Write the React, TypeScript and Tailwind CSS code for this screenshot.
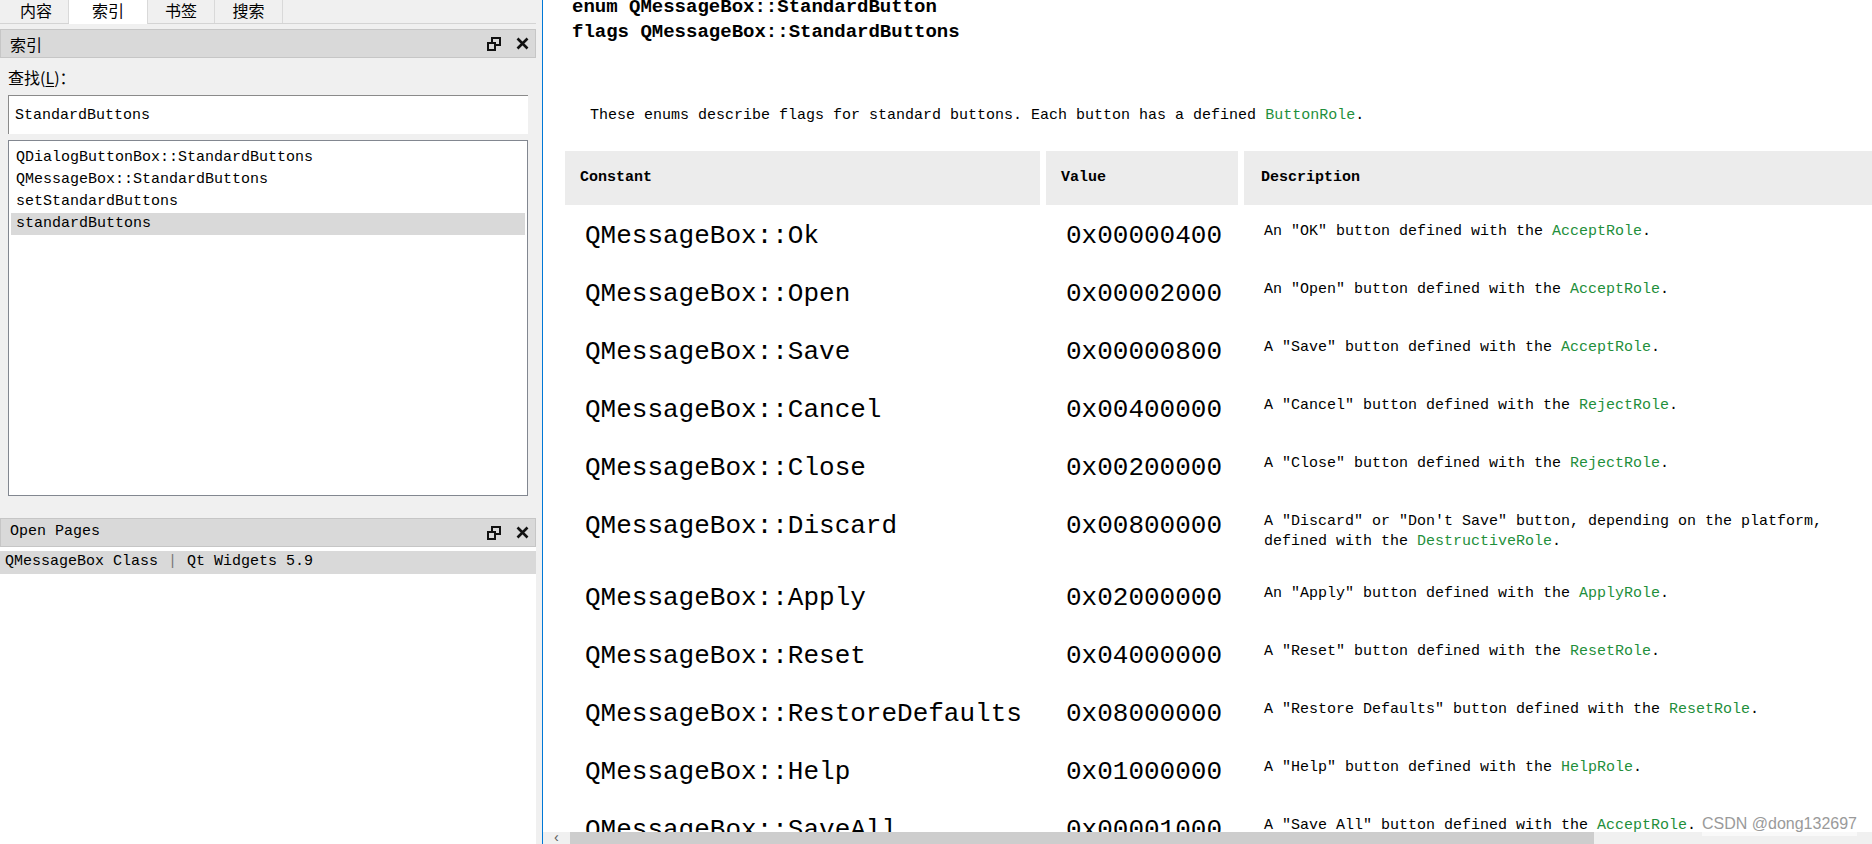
import React from "react";

const mono = { fontFamily: '"Liberation Mono", "Noto Sans CJK SC", monospace' };
const cjk = { fontFamily: '"Noto Sans CJK SC", "Liberation Sans", sans-serif' };

type Row = { name: string; value: string; desc: React.ReactNode[] };

const L = ({ children }: { children: React.ReactNode }) => (
  <span className="text-[#1f8f3c]">{children}</span>
);

const rows: Row[] = [
  { name: "QMessageBox::Ok", value: "0x00000400", desc: [<>An ″OK″ button defined with the <L>AcceptRole</L>.</>] },
  { name: "QMessageBox::Open", value: "0x00002000", desc: [<>An ″Open″ button defined with the <L>AcceptRole</L>.</>] },
  { name: "QMessageBox::Save", value: "0x00000800", desc: [<>A ″Save″ button defined with the <L>AcceptRole</L>.</>] },
  { name: "QMessageBox::Cancel", value: "0x00400000", desc: [<>A ″Cancel″ button defined with the <L>RejectRole</L>.</>] },
  { name: "QMessageBox::Close", value: "0x00200000", desc: [<>A ″Close″ button defined with the <L>RejectRole</L>.</>] },
  {
    name: "QMessageBox::Discard",
    value: "0x00800000",
    desc: [
      <>A ″Discard″ or ″Don't Save″ button, depending on the platform,</>,
      <>defined with the <L>DestructiveRole</L>.</>,
    ],
  },
  { name: "QMessageBox::Apply", value: "0x02000000", desc: [<>An ″Apply″ button defined with the <L>ApplyRole</L>.</>] },
  { name: "QMessageBox::Reset", value: "0x04000000", desc: [<>A ″Reset″ button defined with the <L>ResetRole</L>.</>] },
  { name: "QMessageBox::RestoreDefaults", value: "0x08000000", desc: [<>A ″Restore Defaults″ button defined with the <L>ResetRole</L>.</>] },
  { name: "QMessageBox::Help", value: "0x01000000", desc: [<>A ″Help″ button defined with the <L>HelpRole</L>.</>] },
  { name: "QMessageBox::SaveAll", value: "0x00001000", desc: [<>A ″Save All″ button defined with the <L>AcceptRole</L>.</>] },
];

function FloatIcon() {
  return (
    <svg width="14" height="14" viewBox="0 0 14 14" fill="none" stroke="#111" strokeWidth="2">
      <rect x="5" y="1" width="8" height="7" />
      <rect x="1" y="6" width="7" height="7" fill="#d9d9d9" />
    </svg>
  );
}

function CloseIcon() {
  return (
    <svg width="13" height="13" viewBox="0 0 13 13" stroke="#111" strokeWidth="2.6">
      <path d="M1.5 1.5 L11.5 11.5 M11.5 1.5 L1.5 11.5" />
    </svg>
  );
}

function DockTitle({ title, cn }: { title: string; cn?: boolean }) {
  return (
    <div className="h-[29px] flex items-center border border-[#c6c6c6] bg-[#d9d9d9] pl-[9px] pr-[6px]">
      <span className={cn ? "text-[16px]" : "text-[15px]"} style={cn ? cjk : mono}>
        {title}
      </span>
      <div className="ml-auto flex items-center gap-[15px]">
        <FloatIcon />
        <CloseIcon />
      </div>
    </div>
  );
}

function Tabs() {
  const tabs = ["内容", "索引", "书签", "搜索"];
  const widths = ["w-[65px]", "w-[79px]", "w-[67px]", "w-[68px]"];
  return (
    <div className="h-[24px] flex pl-[4px] border-b border-[#d4d4d4]" style={cjk}>
      {tabs.map((t, i) => (
        <div
          key={t}
          className={
            "flex items-start justify-center text-[16px] leading-[20px] border-r border-[#d9d9d9] " +
            widths[i] +
            (i === 1 ? " bg-white h-[24px]" : " bg-[#f0f0f0]")
          }
        >
          {t}
        </div>
      ))}
    </div>
  );
}

function LeftPane() {
  const items = [
    "QDialogButtonBox::StandardButtons",
    "QMessageBox::StandardButtons",
    "setStandardButtons",
    "standardButtons",
  ];
  return (
    <div className="w-[536px] shrink-0 flex flex-col bg-[#f0f0f0] text-black">
      <Tabs />
      <div className="mt-[5px]">
        <DockTitle title="索引" cn />
      </div>
      <div className="px-[8px]">
        <div className="mt-[8px] h-[22px] flex items-center text-[16px]" style={cjk}>
          查找(<span className="underline underline-offset-2">L</span>)：
        </div>
        <div
          className="mt-[7px] w-[520px] h-[39px] bg-white border-t border-l border-[#8a8a8a] flex items-center pl-[6px] pt-[3px] text-[15px]"
          style={mono}
        >
          StandardButtons
        </div>
        <div className="mt-[6px] w-[520px] h-[356px] bg-white border border-[#828790] px-[2px] pt-[6px]" style={mono}>
          {items.map((it, i) => (
            <div
              key={it}
              className={
                "h-[22px] flex items-center pl-[5px] text-[15px] " +
                (i === 3 ? "bg-[#d9d9d9]" : "")
              }
            >
              {it}
            </div>
          ))}
        </div>
      </div>
      <div className="mt-[22px]">
        <DockTitle title="Open Pages" />
      </div>
      <div className="flex-1 bg-white pt-[4px]">
        <div className="h-[23px] bg-[#d9d9d9] flex items-center pl-[5px] text-[15px]" style={mono}>
          QMessageBox Class <span className="mx-[10px] text-[#777]">|</span> Qt Widgets 5.9
        </div>
      </div>
    </div>
  );
}

function Content() {
  return (
    <div className="flex-1 overflow-hidden text-black">
      <div className="-mt-[5px] pl-[29px] text-[19px] font-bold leading-[25px]" style={mono}>
        <div>enum QMessageBox::StandardButton</div>
        <div>flags QMessageBox::StandardButtons</div>
      </div>
      <p className="mt-[62px] pl-[47px] text-[15px] leading-[18px]" style={mono}>
        These enums describe flags for standard buttons. Each button has a defined <L>ButtonRole</L>.
      </p>
      <div className="mt-[26px] ml-[22px] grid grid-cols-[475px_192px_700px] gap-x-[6px]" style={mono}>
        <div className="h-[54px] bg-[#ececec] flex items-center pl-[15px] text-[15px] font-bold">Constant</div>
        <div className="h-[54px] bg-[#ececec] flex items-center pl-[15px] text-[15px] font-bold">Value</div>
        <div className="h-[54px] bg-[#ececec] flex items-center pl-[17px] text-[15px] font-bold">Description</div>
        {rows.map((r) => (
          <React.Fragment key={r.name}>
            <div className="pt-[16px] pb-[12px] pl-[20px] text-[26px] leading-[30px]">{r.name}</div>
            <div className="pt-[16px] pb-[12px] pl-[20px] text-[26px] leading-[30px]">{r.value}</div>
            <div className="pt-[17px] pb-[15px] pl-[20px] text-[15px] leading-[20px]">
              {r.desc.map((d, i) => (
                <div key={i}>{d}</div>
              ))}
            </div>
          </React.Fragment>
        ))}
      </div>
    </div>
  );
}

function HScrollBar() {
  return (
    <div className="h-[12px] flex bg-[#f0f0f0] shrink-0">
      <div className="w-[27px] flex items-center justify-center text-[#606060] text-[14px] leading-[12px]" style={mono}>
        ‹
      </div>
      <div className="w-[1024px] bg-[#cdcdcd]" />
    </div>
  );
}

export default function App() {
  return (
    <div className="w-[1872px] h-[844px] flex overflow-hidden bg-[#f0f0f0]">
      <LeftPane />
      <div className="w-[6px] shrink-0 bg-[#f0f0f0]" />
      <div className="relative flex-1 flex flex-col bg-white border-l border-[#0078d7] overflow-hidden">
        <Content />
        <HScrollBar />
        <div
          className="absolute right-[15px] bottom-[8px] text-[16px] text-[#9a9a9a] bg-white/60"
          style={{ fontFamily: '"Liberation Sans", Arial, sans-serif' }}
        >
          CSDN @dong132697
        </div>
      </div>
    </div>
  );
}
